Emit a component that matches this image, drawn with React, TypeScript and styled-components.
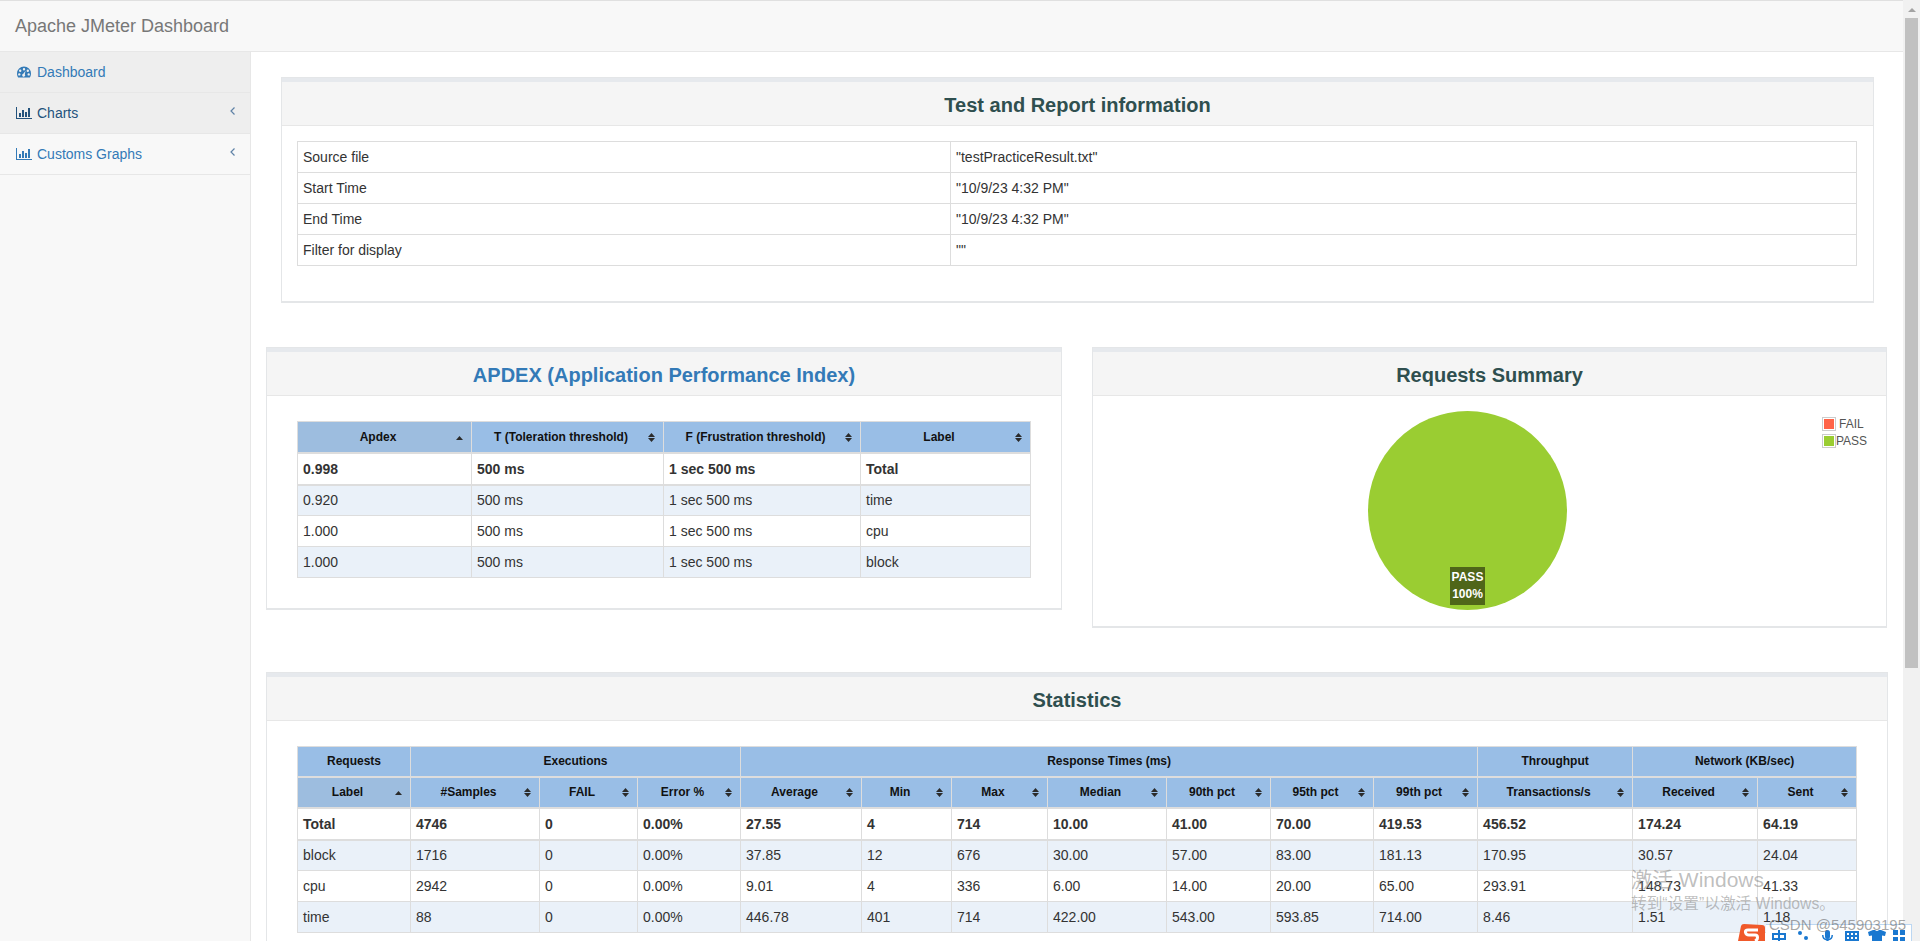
import React from "react";
import styled, { createGlobalStyle } from "styled-components";

const Global = createGlobalStyle`
  html, body { margin: 0; padding: 0; height: 100%; overflow: hidden; background: #fff; }
  body { font-family: "Liberation Sans", Arial, sans-serif; font-size: 14px; line-height: 20px; color: #333; }
  * { box-sizing: border-box; }
`;

const Viewport = styled.div`
  position: relative;
  display: flex;
  width: 1920px;
  height: 941px;
  overflow: hidden;
`;
const Page = styled.div`
  width: 1903px;
  flex: none;
  display: flex;
  flex-direction: column;
`;
const Rail = styled.div`
  width: 17px;
  flex: none;
  background: #f1f1f1;
  display: flex;
  flex-direction: column;
  align-items: center;
`;
const RailArrow = styled.div`
  height: 17px;
  width: 100%;
  display: flex;
  align-items: center;
  justify-content: center;
  &::before {
    content: "";
    margin-top: 3px;
    border-left: 4px solid transparent;
    border-right: 4px solid transparent;
    border-bottom: 4px solid #a3a3a3;
  }
`;
const RailThumb = styled.div`
  width: 13px;
  height: 650px;
  margin-top: 1px;
  background: #c1c1c1;
`;

const Navbar = styled.header`
  height: 52px;
  flex: none;
  background: #f8f8f8;
  border-top: 1px solid #e0e0e0;
  border-bottom: 1px solid #e7e7e7;
  padding: 15px;
  font-size: 18px;
  line-height: 20px;
  color: #777;
`;
const Body = styled.div`
  display: flex;
  flex: 1;
  min-height: 0;
`;
const Sidebar = styled.nav`
  width: 251px;
  flex: none;
  background: #f8f8f8;
  border-right: 1px solid #e7e7e7;
`;
const NavItem = styled.a<{ $active?: boolean; $dark?: boolean }>`
  display: flex;
  align-items: center;
  height: 41px;
  padding: 0 15px 0 16px;
  border-bottom: 1px solid #e7e7e7;
  background: ${(p) => (p.$active ? "#eeeeee" : "transparent")};
  color: ${(p) => (p.$dark ? "#23527c" : "#337ab7")};
`;
const LeadIcon = styled.svg`
  width: 16px;
  height: 14px;
  margin-right: 5px;
  flex: none;
`;
const NavLabel = styled.span`
  flex: 1;
`;
const ChevronIcon = styled.svg`
  width: 5px;
  height: 8px;
  margin-top: -4px;
  flex: none;
  fill: none;
  stroke: #5f82a6;
  stroke-width: 1.2;
`;

const Gauge = () => (
  <LeadIcon viewBox="0 0 16 14">
    <path
      fillRule="evenodd"
      fill="currentColor"
      d="M8 1.500a7 7 0 0 1 7 7c0 1.700-.5 3-1.200 4H2.200C1.500 11.500 1 10.200 1 8.500a7 7 0 0 1 7-7zM8 3a1.200 1.200 0 1 0 0 2.400A1.200 1.200 0 0 0 8 3zM4.200 4.500a1.200 1.200 0 1 0 0 2.400 1.200 1.200 0 0 0 0-2.400zM11.800 4.500a1.200 1.200 0 1 0 0 2.400 1.200 1.200 0 0 0 0-2.400zM3.300 8.200a1.200 1.200 0 1 0 0 2.400 1.200 1.200 0 0 0 0-2.400zM12.700 8.200a1.200 1.200 0 1 0 0 2.400 1.200 1.200 0 0 0 0-2.400zM9.600 5.800L7.300 8.700a1.500 1.500 0 1 0 1.500.5z"
    />
  </LeadIcon>
);
const BarIcon = () => (
  <LeadIcon viewBox="0 0 16 14" fill="currentColor">
    <path d="M0 1h1v11h15v1H0z" />
    <path d="M3 7h2v4H3zM6 4h2v7H6zM9 6h2v5H9zM12 2h2v9h-2z" />
  </LeadIcon>
);
const Chevron = () => (
  <ChevronIcon viewBox="0 0 5 8">
    <path d="M4.500 .5L1 4l3.500 3.500" />
  </ChevronIcon>
);

const Main = styled.main`
  flex: 1;
  min-width: 0;
  padding: 25px 15px 0 15px;
  display: flex;
  flex-direction: column;
  overflow: hidden;
`;
const Panel = styled.section<{ $inset?: boolean }>`
  background: #fff;
  border: 1px solid #e4e6e8;
  border-bottom-width: 2px;
  ${(p) => (p.$inset ? "margin: 0 14px 0 15px;" : "")}
`;
const Stripe = styled.div`
  height: 4px;
  background: #e6e9ed;
`;
const Heading = styled.h2<{ $link?: boolean }>`
  margin: 0;
  height: 44px;
  background: #f5f5f5;
  border-bottom: 1px solid #e7e7e7;
  text-align: center;
  font-size: 20px;
  font-weight: 700;
  line-height: 46px;
  color: ${(p) => (p.$link ? "#337ab7" : "#2f4f4f")};
`;
const PanelBody = styled.div`
  padding: 15px 16px 35px 15px;
`;
const ApdexBody = styled.div`
  padding: 25px 30px 30px 30px;
`;
const PieBody = styled.div`
  position: relative;
  height: 230px;
`;
const StatsBody = styled.div`
  padding: 25px 30px 40px 30px;
`;
const Row2 = styled.div`
  display: flex;
  align-items: flex-start;
  gap: 30px;
  margin-top: 44px;
`;
const Col = styled.div<{ $w: number }>`
  width: ${(p) => p.$w}px;
  flex: none;
`;
const StatsWrap = styled.div`
  margin-top: 44px;
`;

const Table = styled.table`
  width: 100%;
  border-collapse: collapse;
  table-layout: fixed;
`;
const InfoCell = styled.td`
  height: 31px;
  padding: 0 5px;
  border: 1px solid #ddd;
`;
const Th = styled.th<{ $sorted?: boolean; $group?: boolean }>`
  position: relative;
  height: ${(p) => (p.$group ? 30 : 31)}px;
  padding: ${(p) => (p.$group ? "0 5px" : "0 18px 0 5px")};
  border: 1px solid #ddd;
  border-bottom-width: 2px;
  background: ${(p) => (p.$sorted ? "#9dbddf" : "#99bee6")};
  color: #111;
  font-size: 12px;
  font-weight: 700;
  text-align: center;
  line-height: 14px;
`;
const SortIcon = styled.svg`
  position: absolute;
  right: 7px;
  top: 50%;
  margin-top: -6px;
  width: 9px;
  height: 12px;
  fill: #2b2b2b;
`;
const Td = styled.td<{ $bold?: boolean; $shade?: boolean }>`
  height: 31px;
  padding: 0 5px;
  border: 1px solid #ddd;
  ${(p) => (p.$bold ? "border-bottom-width: 2px; font-weight: 700; height: 32px;" : "")}
  background: ${(p) => (p.$shade ? "#eaf1f9" : "#fff")};
  white-space: nowrap;
`;

const Sort = ({ asc }: { asc?: boolean }) => (
  <SortIcon viewBox="0 0 9 12">
    {asc ? (
      <path d="M4.500 5L8 9H1z" />
    ) : (
      <path d="M4.500 2L8 6H1zM4.500 11L1 7h7z" />
    )}
  </SortIcon>
);

const HeadCell = ({ children, sorted }: { children: React.ReactNode; sorted?: boolean }) => (
  <Th $sorted={sorted}>
    {children}
    <Sort asc={sorted} />
  </Th>
);

const PieLabel = styled.div`
  position: absolute;
  left: 357px;
  top: 171px;
  width: 35px;
  height: 38px;
  background: #4f6619;
  color: #fff;
  font-size: 12px;
  font-weight: 700;
  line-height: 17px;
  padding-top: 2px;
  text-align: center;
`;
const PieChart = styled.svg`
  position: absolute;
  left: 275px;
  top: 15px;
  width: 199px;
  height: 199px;
`;
const Legend = styled.div`
  position: absolute;
  left: 729px;
  top: 21px;
  display: flex;
  flex-direction: column;
  gap: 3px;
  font-size: 12px;
  line-height: 14px;
  color: #545454;
`;
const LegendRow = styled.div`
  display: flex;
  align-items: center;
`;
const Swatch = styled.span<{ $color: string }>`
  width: 14px;
  height: 14px;
  border: 1px solid #ccc;
  padding: 1px;
  background: ${(p) => p.$color};
  background-clip: content-box;
  flex: none;
`;
const LegendText = styled.span<{ $gap: number }>`
  margin-left: ${(p) => p.$gap}px;
`;

const Watermark = styled.div`
  position: absolute;
  left: 1631px;
  top: 868px;
  color: rgba(120, 120, 120, 0.48);
  font-family: "Liberation Sans", "Noto Sans CJK SC", sans-serif;
  pointer-events: none;
`;
const WatermarkBig = styled.div`
  font-size: 21px;
  line-height: 24px;
`;
const WatermarkSmall = styled.div`
  font-size: 15.7px;
  line-height: 20px;
  margin-top: 2px;
`;
const Csdn = styled.div`
  position: absolute;
  left: 1769px;
  top: 916px;
  font-size: 15px;
  line-height: 18px;
  color: rgba(90, 90, 90, 0.55);
  white-space: nowrap;
  z-index: 3;
`;
const Ime = styled.div`
  position: absolute;
  left: 1766px;
  top: 924px;
  width: 146px;
  height: 17px;
  background: #fff;
  border-top: 1px solid #bcd7f2;
  border-right: 1px solid #bcd7f2;
  z-index: 2;
`;
const ImeIcons = styled.svg`
  position: absolute;
  left: 0;
  top: 0;
  width: 145px;
  height: 16px;
`;
const SogouLogo = styled.svg`
  position: absolute;
  left: 1734px;
  top: 924px;
  width: 32px;
  height: 17px;
  z-index: 2;
`;

const infoRows = [
  ["Source file", '"testPracticeResult.txt"'],
  ["Start Time", '"10/9/23 4:32 PM"'],
  ["End Time", '"10/9/23 4:32 PM"'],
  ["Filter for display", '""'],
];
const apdexCols = [174, 192, 197, 170];
const apdexHead = ["Apdex", "T (Toleration threshold)", "F (Frustration threshold)", "Label"];
const apdexRows = [
  ["0.998", "500 ms", "1 sec 500 ms", "Total"],
  ["0.920", "500 ms", "1 sec 500 ms", "time"],
  ["1.000", "500 ms", "1 sec 500 ms", "cpu"],
  ["1.000", "500 ms", "1 sec 500 ms", "block"],
];
const statCols = [113, 129, 98, 103, 121, 90, 96, 119, 104, 103, 104, 155, 125, 99];
const statHead = [
  "Label", "#Samples", "FAIL", "Error %", "Average", "Min", "Max", "Median",
  "90th pct", "95th pct", "99th pct", "Transactions/s", "Received", "Sent",
];
const statGroups: [string, number][] = [
  ["Requests", 1],
  ["Executions", 3],
  ["Response Times (ms)", 7],
  ["Throughput", 1],
  ["Network (KB/sec)", 2],
];
const statRows = [
  ["Total", "4746", "0", "0.00%", "27.55", "4", "714", "10.00", "41.00", "70.00", "419.53", "456.52", "174.24", "64.19"],
  ["block", "1716", "0", "0.00%", "37.85", "12", "676", "30.00", "57.00", "83.00", "181.13", "170.95", "30.57", "24.04"],
  ["cpu", "2942", "0", "0.00%", "9.01", "4", "336", "6.00", "14.00", "20.00", "65.00", "293.91", "148.73", "41.33"],
  ["time", "88", "0", "0.00%", "446.78", "401", "714", "422.00", "543.00", "593.85", "714.00", "8.46", "1.51", "1.18"],
];

const Rows = ({ rows }: { rows: string[][] }) => (
  <tbody>
    {rows.map((r, i) => (
      <tr key={i}>
        {r.map((c, j) => (
          <Td key={j} $bold={i === 0} $shade={i % 2 === 1}>
            {c}
          </Td>
        ))}
      </tr>
    ))}
  </tbody>
);

export default function App() {
  return (
    <Viewport>
      <Global />
      <Page>
        <Navbar>Apache JMeter Dashboard</Navbar>
        <Body>
          <Sidebar>
            <NavItem $active>
              <Gauge />
              <NavLabel>Dashboard</NavLabel>
            </NavItem>
            <NavItem $active $dark>
              <BarIcon />
              <NavLabel>Charts</NavLabel>
              <Chevron />
            </NavItem>
            <NavItem>
              <BarIcon />
              <NavLabel>Customs Graphs</NavLabel>
              <Chevron />
            </NavItem>
          </Sidebar>
          <Main>
            <Panel $inset>
              <Stripe />
              <Heading>Test and Report information</Heading>
              <PanelBody>
                <Table>
                  <colgroup>
                    <col style={{ width: 653 }} />
                    <col />
                  </colgroup>
                  <tbody>
                    {infoRows.map((r) => (
                      <tr key={r[0]}>
                        <InfoCell>{r[0]}</InfoCell>
                        <InfoCell>{r[1]}</InfoCell>
                      </tr>
                    ))}
                  </tbody>
                </Table>
              </PanelBody>
            </Panel>
            <Row2>
              <Col $w={796}>
                <Panel>
                  <Stripe />
                  <Heading $link>APDEX (Application Performance Index)</Heading>
                  <ApdexBody>
                    <Table>
                      <colgroup>
                        {apdexCols.map((w, i) => (
                          <col key={i} style={{ width: w }} />
                        ))}
                      </colgroup>
                      <thead>
                        <tr>
                          {apdexHead.map((h, i) => (
                            <HeadCell key={h} sorted={i === 0}>
                              {h}
                            </HeadCell>
                          ))}
                        </tr>
                      </thead>
                      <Rows rows={apdexRows} />
                    </Table>
                  </ApdexBody>
                </Panel>
              </Col>
              <Col $w={795}>
                <Panel>
                  <Stripe />
                  <Heading>Requests Summary</Heading>
                  <PieBody>
                    <PieChart viewBox="0 0 199 199">
                      <circle cx="99.5" cy="99.5" r="99.5" fill="#9acd32" />
                    </PieChart>
                    <PieLabel>
                      PASS
                      <br />
                      100%
                    </PieLabel>
                    <Legend>
                      <LegendRow>
                        <Swatch $color="#ff6347" />
                        <LegendText $gap={3}>FAIL</LegendText>
                      </LegendRow>
                      <LegendRow>
                        <Swatch $color="#9acd32" />
                        <LegendText $gap={0}>PASS</LegendText>
                      </LegendRow>
                    </Legend>
                  </PieBody>
                </Panel>
              </Col>
            </Row2>
            <StatsWrap>
              <Panel>
                <Stripe />
                <Heading>Statistics</Heading>
                <StatsBody>
                  <Table>
                    <colgroup>
                      {statCols.map((w, i) => (
                        <col key={i} style={{ width: w }} />
                      ))}
                    </colgroup>
                    <thead>
                      <tr>
                        {statGroups.map(([g, n]) => (
                          <Th key={g} $group colSpan={n}>
                            {g}
                          </Th>
                        ))}
                      </tr>
                      <tr>
                        {statHead.map((h, i) => (
                          <HeadCell key={h} sorted={i === 0}>
                            {h}
                          </HeadCell>
                        ))}
                      </tr>
                    </thead>
                    <Rows rows={statRows} />
                  </Table>
                </StatsBody>
              </Panel>
            </StatsWrap>
          </Main>
        </Body>
      </Page>
      <Rail>
        <RailArrow />
        <RailThumb />
      </Rail>
      <Watermark>
        <WatermarkBig>激活 Windows</WatermarkBig>
        <WatermarkSmall>转到“设置”以激活 Windows。</WatermarkSmall>
      </Watermark>
      <SogouLogo viewBox="0 0 32 17">
        <path d="M7 2Q7.500 0 10 0L28 1Q31 1 31 4L31 17L4 17Z" fill="#f0592a" />
        <path d="M24 6H14q-3 0-2.500 2.500t3.500 2.500h6q2.500 0 2.500 2.500T21 17" fill="none" stroke="#fff" strokeWidth="3" />
      </SogouLogo>
      <Ime>
        <ImeIcons viewBox="0 0 145 16" fill="#1a78d0">
          <path fillRule="evenodd" d="M12 5h2v3h6v7h-6v1h-2v-1H6V8h6zM8 10v3h4v-3zM14 10v3h4v-3z" />
          <circle cx="34" cy="8" r="2" />
          <circle cx="40" cy="13" r="2" />
          <path d="M59 7.500a2.500 2.500 0 0 1 5 0v4a2.500 2.500 0 0 1-5 0zM56 10h1.500a4 4 0 0 0 8 0H67a5.500 5.500 0 0 1-4.500 5.400V16h-2v-.6A5.500 5.500 0 0 1 56 10z" />
          <path fillRule="evenodd" d="M79 6h14v10H79zM81 8v2h2V8zM85 8v2h2V8zM89 8v2h2V8zM81 12v2h2v-2zM85 12v2h2v-2zM89 12v2h2v-2z" />
          <path d="M102 7l5-2h2q2 2 4 0h2l5 2-1 4-3-.5V16h-10v-5.500l-3 .5z" />
          <path d="M127 5h5v5h-5zM134 5h5v5h-5zM127 12h5v4h-5zM134 12h5v4h-5z" />
        </ImeIcons>
      </Ime>
      <Csdn>CSDN @545903195</Csdn>
    </Viewport>
  );
}
